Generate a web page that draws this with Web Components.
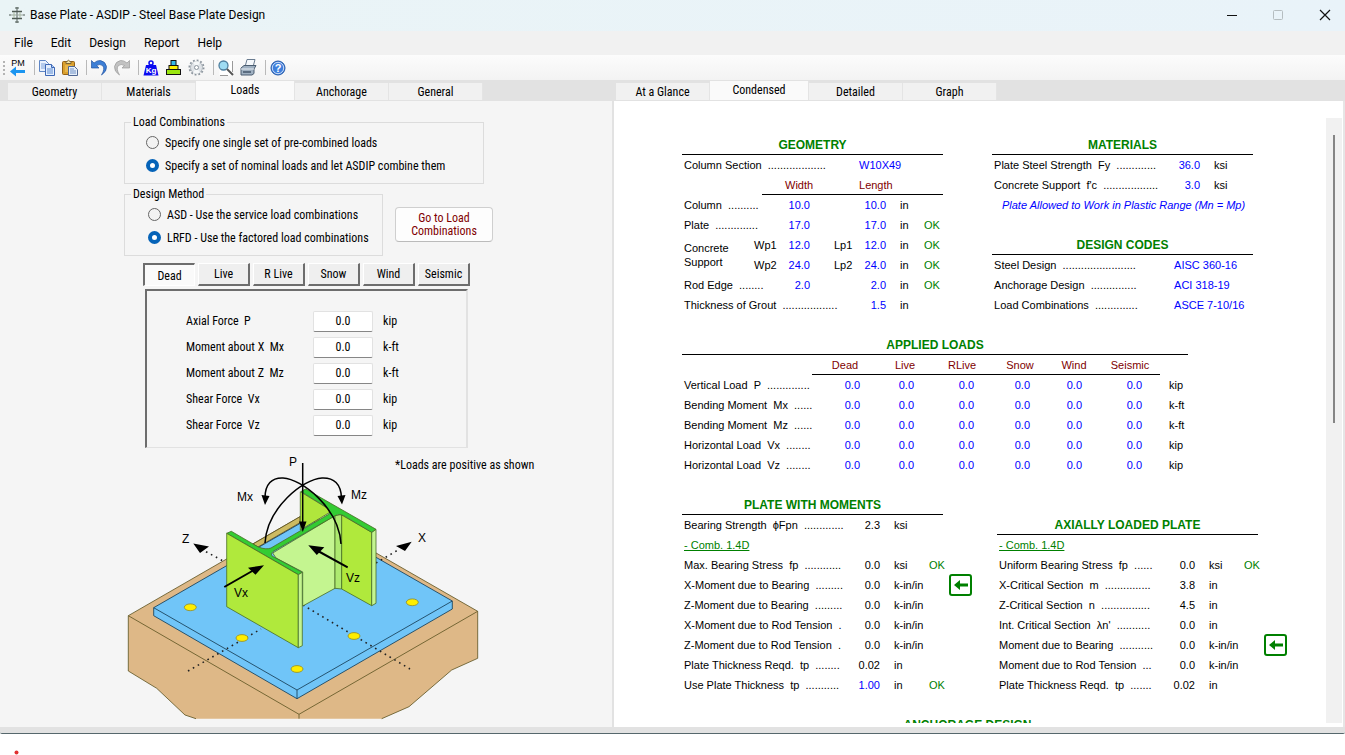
<!DOCTYPE html>
<html lang="en">
<head>
<meta charset="utf-8">
<title>Base Plate - ASDIP - Steel Base Plate Design</title>
<style>
html, body { margin: 0; height: 100%; background: #fff; }
body { --ui: "Roboto Condensed", Roboto, "Liberation Sans", sans-serif; --report: "Liberation Sans", Arial, sans-serif; font: 12px/14px var(--ui); color: #000; overflow: hidden; }
</style>
</head>
<body>
<app-window></app-window>
<script>
const define = (name, html, setup) => {
  const template = document.createElement('template');
  template.innerHTML = html;
  customElements.define(name, class extends HTMLElement {
    connectedCallback() {
      if (this.shadowRoot) return;
      this.attachShadow({ mode: 'open' }).append(template.content.cloneNode(true));
      if (setup) setup(this, this.shadowRoot);
    }
  });
};

define('title-bar', `
<style>
:host { display: flex; box-sizing: border-box; align-items: center; height: 31px; padding: 0 0 2px 9px; background: linear-gradient(90deg, #eaf4f6, #e9f3f9); font: 12px/16px Roboto, sans-serif; }
h1 { flex: 1; margin: 0 0 0 5px; font: inherit; }
button { width: 46px; height: 29px; padding: 0; border: 0; background: none; display: grid; place-items: center; }
button:last-child { width: 44px; padding-left: 4px; margin-left: 0; }
</style>
<svg width="16" height="18" viewBox="0 0 16 18" fill="none" stroke="#4f5a55"><path d="M8 1v16M6 2h4M6 16h4M0 9h2M14 9h2"/><path d="M3 5.500h10M3 12.500h10" stroke-width="1.500"/><path d="M2 9h12" stroke="#99a59c"/><path d="M5 6v6M11 6v6" stroke="#a8b8a0"/></svg>
<h1>Base Plate - ASDIP - Steel Base Plate Design</h1>
<button aria-label="Minimize"><svg width="12" height="12" stroke="#111"><path d="M1 6.500h10"/></svg></button>
<button aria-label="Maximize" disabled><svg width="12" height="12" fill="none" stroke="#b5bdc0"><rect x="1.500" y="1.500" width="9" height="9" rx="1"/></svg></button>
<button aria-label="Close"><svg width="12" height="12" stroke="#111" stroke-width="1.200"><path d="M1 1l10 10M11 1L1 11"/></svg></button>
`);

define('menu-bar', `
<style>
:host { display: block; background: #f1f1f1; font: 12px/24px Roboto, sans-serif; }
nav { display: flex; gap: 18px; padding-left: 14px; height: 24px; }
a { color: inherit; text-decoration: none; }
</style>
<nav><a href="#file">File</a><a href="#edit">Edit</a><a href="#design">Design</a><a href="#report">Report</a><a href="#help">Help</a></nav>
`);

define('tool-bar', `
<style>
:host { display: flex; align-items: center; height: 25px; padding-left: 3px; background: linear-gradient(#fcfcfc, #f3f3f3); }
button { padding: 0; border: 0; background: none; width: 23px; height: 23px; display: grid; place-items: center; }
i { width: 1px; height: 15px; background: #b9b9b9; margin: 0 0 0 5px; }
.grip { width: 2px; height: 14px; margin: 0 1px 0 0; background: repeating-linear-gradient(#b4b4b4 0 2px, transparent 2px 4px); }
svg { display: block; overflow: visible; }
text { font-family: "Liberation Sans", sans-serif; }
</style>
<i class="grip"></i>
<button aria-label="PM"><svg width="16" height="18"><text x="8" y="7" text-anchor="middle" font-size="9">PM</text><path d="M0 12.500l6-5v3.500h9v3H6v3.500z" fill="#1b95f0"/></svg></button>
<i></i>
<button aria-label="Copy"><svg width="16" height="16"><path d="M.500.500h6l3 3v8h-9z" fill="#eaf2fd" stroke="#5f86c5"/><path d="M2 4h5M2 6h5M2 8h5" stroke="#7ea4dc"/><path d="M6.500 4.500h6l3 3v8h-9z" fill="#e4effd" stroke="#3e68b5"/><path d="M12.500 4.500v3h3" fill="#b2cdf5" stroke="#3e68b5"/><path d="M8 9h6M8 11h6M8 13h6" stroke="#5d8bd2"/></svg></button>
<button aria-label="Paste"><svg width="16" height="16"><rect x=".500" y="1.500" width="12" height="13" rx="1" fill="#d9a02e" stroke="#946117"/><path d="M4 3.500V1.500h1Q6.500-1 8 1.500h1v2z" fill="#f4e3a5" stroke="#7c6636"/><path d="M3 5h7v7H3z" fill="#e8b64b"/><path d="M6.500 6.500h6l3 3v6h-9z" fill="#e6effa" stroke="#4f6793"/><path d="M8 9h4M8 11h6M8 13h6" stroke="#6e90c5"/></svg></button>
<i></i>
<button aria-label="Undo"><svg width="16" height="16"><path d="M.500.500v7.500h7.500L5.500 5.500Q9 3.500 11.500 5.500 14.500 8.500 10.500 15 16 11.500 15.500 6.500 14.500 1.500 9.500.500 6 .200 3 3z" fill="#3d7fd6" stroke="#2454a2" stroke-width=".7"/></svg></button>
<button aria-label="Redo" disabled><svg width="16" height="16"><path d="M15.500.500v7.500H8L10.500 5.500Q7 3.500 4.500 5.500 1.500 8.500 5.500 15 0 11.500.500 6.500 1.500 1.500 6.500.500 10 .200 13 3z" fill="#c2c2c2" stroke="#9a9a9a" stroke-width=".7"/></svg></button>
<i></i>
<button aria-label="Units"><svg width="16" height="16"><circle cx="8" cy="3" r="2" fill="none" stroke="#0a0af0" stroke-width="1.500"/><path d="M3 5h10l2.500 10.500H.500z" fill="#0a0af0"/><text x="8" y="13" text-anchor="middle" font-size="8" font-weight="bold" fill="#fff">Kg</text></svg></button>
<button aria-label="Footing"><svg width="15" height="15" stroke="#111"><rect x="5" y=".5" width="5" height="5" fill="#38b9e8"/><rect x="3" y="5.500" width="9" height="4" fill="#fff100"/><rect x=".5" y="9.500" width="14" height="5" fill="#9be610"/></svg></button>
<button aria-label="Settings"><svg width="17" height="17"><circle cx="8.500" cy="8.500" r="7" fill="none" stroke="#8c959e" stroke-width="2" stroke-dasharray="1.800 1.860"/><circle cx="8.500" cy="8.500" r="6" fill="#dfe3e7" stroke="#b0b7bd"/><path d="M8.500 8.500L5 3.500a6 6 0 0 1 7 0zM8.500 8.500L5 13.500a6 6 0 0 0 7 0z" fill="#f6f8f9"/><circle cx="8.500" cy="8.500" r="2" fill="#fff" stroke="#8c959e"/></svg></button>
<i></i>
<button aria-label="Preview"><svg width="16" height="16"><path d="M1.500.500h13v15h-13z" fill="#fff"/><path d="M14.500 1v11M2 15.500h8" stroke="#9a9a9a"/><circle cx="5.500" cy="5.500" r="4.500" fill="#9fdcf3" stroke="#4f7f9f" stroke-width="1.300"/><path d="M9 9l6 6" stroke="#555" stroke-width="2"/></svg></button>
<button aria-label="Print"><svg width="17" height="17"><path d="M5 8l2-7.500h8L13 8z" fill="#f6f9fc" stroke="#6a7c90"/><path d="M1 9l3-2.500h12L14 10v4.500L12 16H1z" fill="#9fb0c1" stroke="#4b5d70"/><path d="M1 10h13" stroke="#e8eef4"/><path d="M3 13h8" stroke="#43566a" stroke-width="1.500"/></svg></button>
<i></i>
<button aria-label="Help"><svg width="16" height="16"><circle cx="8" cy="8" r="7" fill="#3f7fdc" stroke="#2459a8"/><circle cx="8" cy="8" r="5.700" fill="none" stroke="#c8dcf8"/><text x="8" y="12" text-anchor="middle" font-size="11" font-weight="bold" fill="#fff">?</text></svg></button>
`);

define('tab-strip', `
<style>
:host { display: flex; height: 21px; align-items: flex-end; background: #e2e2e2; border-bottom: 1px solid #e2e2e2; box-sizing: border-box; }
::slotted(button) { box-sizing: border-box; width: 94px; height: 17px; padding: 0; border: 0; border-right: 1px solid #e4e4e4; background: #f1f1f1; font: 12px/16px var(--ui); color: #000; }
::slotted(button[aria-selected="true"]) { width: 99px; height: 19px; padding-bottom: 2px; background: #fafafa; }
</style>
<slot></slot>
`);

define('radio-row', `
<style>
:host { display: block; }
label { display: flex; align-items: center; gap: 6px; height: 23px; }
input { appearance: none; box-sizing: border-box; width: 13px; height: 13px; margin: 0; border: 1px solid #666; border-radius: 50%; background: #f3f3f3; }
input:checked { border: 4px solid #0563b8; background: #fff; }
</style>
<label><input type="radio"><span><slot></slot></span></label>
`, (host, root) => { root.querySelector('input').checked = host.hasAttribute('checked'); });

define('load-row', `
<style>
:host { display: block; }
label { display: grid; grid-template-columns: 127px 60px 1fr; align-items: center; height: 26px; white-space: pre; }
input { box-sizing: border-box; width: 60px; height: 21px; padding: 0; border: 1px solid #e2e2e2; border-bottom-color: #868686; border-radius: 2px; background: #fff; text-align: center; font: 12px/16px var(--ui); }
.unit { padding-left: 10px; }
</style>
<label><slot></slot><input type="text" value="0.0"><span class="unit"></span></label>
`, (host, root) => { root.querySelector('.unit').textContent = host.getAttribute('unit'); });

define('load-diagram', `
<style>
:host { display: block; }
svg { display: block; }
text { font: 12px "Liberation Sans", sans-serif; }
</style>
<svg width="420" height="270" viewBox="124 450 420 270" role="img" aria-label="Base plate with positive load directions">
<g stroke="#5a5220" stroke-width=".8" stroke-linejoin="round">
<path d="M128.300 615.700L306.400 513 477.700 611.300V624V658.300L451.700 670 409 706.700 381.700 718.700H196L185 715 156.700 688.300 128.300 671z" fill="#deb887" stroke="none"/>
<path d="M196 718.700L185 715 156.700 688.300 128.300 671V615.700L306.400 513 477.700 611.300V658.300L451.700 670 409 706.700 381.700 718.700" fill="none"/>
<path d="M128.300 615.700L299 714.300 477.700 611.300M299 714.300V718.700" fill="none"/>
<path d="M253 544L300 516.700V522.700L258 547z" fill="#cdbb62"/>
</g>
<g stroke="#1d4660" stroke-width=".9" fill="#70c5f8" stroke-linejoin="round">
<path d="M153.700 607.700L308.400 518.600 452.300 601V609L297 698.700 153.700 615.700z"/>
<path d="M153.700 607.700L297 690 452.300 601M297 690V698.700" fill="none"/>
</g>
<path d="M206 551.700L224 561.500M303 605L410 669M188 671L261 629M376 563L398 550" stroke="#222" stroke-width="1.600" stroke-dasharray="1.600 4" fill="none"/>
<g fill="#ffee00" stroke="#8f8a2a" stroke-width=".8">
<ellipse cx="190.300" cy="607.300" rx="6" ry="3.400"/><ellipse cx="242" cy="638" rx="6" ry="3.400"/><ellipse cx="297" cy="669" rx="6" ry="3.400"/><ellipse cx="354" cy="636" rx="6" ry="3.400"/><ellipse cx="412.300" cy="602.300" rx="6" ry="3.400"/>
</g>
<g stroke="#476b25" stroke-width=".8" stroke-linejoin="round">
<path d="M300.300 491.700L332 511 300.300 530z" fill="#b0e63c"/>
<path d="M272.700 553L335 515.700V588.300L302.700 606V572L276 558z" fill="#c4f590"/>
<path d="M335 515.700L341.700 514.300V589L335 588.300z" fill="#aeea70"/>
<path d="M341.700 515L371.700 532.300V605.700L341.700 589z" fill="#b0e93c"/>
<path d="M371.700 532.300L376 529.300V603.300L371.700 605.700z" fill="#c4f590"/>
<path d="M301 491.500L305.700 489 376 529.300 371.700 532.300 343 515.300Q339 513.500 335 515.700L273 551.500Q270 554 272 556L302.300 572.300 298.300 574.700 226.700 533.300 231.300 531.300 258.300 547Q266 550 271 548L329 514Q331 511 326 507z" fill="#33cc33"/>
<path d="M226.700 533.300L298.300 574.700V647.700L226.700 606.700z" fill="#b0e93c"/>
<path d="M298.300 574.700L302.300 572.300V645.700L298.300 647.700z" fill="#c4f590"/>
</g>
<g fill="none" stroke="#000" stroke-width="1.500">
<path d="M302.700 463V525M265 498C265 484 272 477.500 283 478C302 479 339 508 341 544M341.500 498C341 484 334 477.500 322 478C303 479 267 508 265 543"/>
<path d="M224.300 587L254 570M347.700 567.300L318 551" stroke-width="2"/>
</g>
<path d="M299 521.500h7.500l-3.700 10.500zM261.500 495l8 1-4.500 9zM337.500 496l8-1-3.500 9.500zM193.300 543.500l15.700 3-9 6.500zM411.700 541.700l-15.700 4.300 9 5zM264 565.300l-16 2.400 7.500 7zM308.300 545.300l16 2-7.500 7.700z"/>
<text x="289" y="466">P</text><text x="237" y="501">Mx</text><text x="351" y="499">Mz</text><text x="182" y="543">Z</text><text x="418" y="542">X</text><text x="234" y="597">Vx</text><text x="346" y="582">Vz</text>
</svg>
`);

define('loads-panel', `
<style>
:host { display: block; box-sizing: border-box; margin: 0 3px 0 6px; padding: 14px 0 0 118px; background: #f5f5f5; overflow: hidden; }
fieldset { box-sizing: border-box; margin: 0; padding: 2px 0 6px 21px; border: 1px solid #dcdcdc; width: 360px; }
legend { margin-left: -15px; padding: 0 2px; line-height: 14px; }
.method { display: flex; align-items: flex-end; gap: 12px; margin-top: 3px; }
.method fieldset { width: 259px; padding-left: 23px; }
.method legend { margin-left: -17px; }
.go { box-sizing: border-box; width: 98px; height: 35px; margin-bottom: 14px; padding: 0; border: 1px solid #cfcfcf; border-bottom-color: #bbb; border-radius: 4px; background: #fdfdfd; color: #800000; font: 12px/13px var(--ui); }
.cases { display: flex; gap: 3px; margin: 7px 0 3px 19px; }
.cases button { box-sizing: border-box; width: 52px; height: 23px; padding: 0; border: 1px solid #fff; border-right: 2px solid #6d6d6d; border-bottom: 2px solid #6d6d6d; background: #efefef; font: 12px/16px var(--ui); color: #000; }
.cases button[aria-selected="true"] { border: 2px solid #6d6d6d; border-right: 1px solid #fff; border-bottom: 1px solid #fff; background: #fafafa; padding-top: 1px; }
.inputs { box-sizing: border-box; width: 323px; margin-left: 21px; padding: 17px 0 9px 39px; border: 2px solid #6d6d6d; border-right-color: #e2e2e2; border-bottom-color: #e2e2e2; border-bottom-width: 1px; }
figure { display: grid; margin: 2px 0 0; }
load-diagram, figcaption { grid-area: 1 / 1; }
figcaption { padding: 8px 0 0 271px; }
</style>
<fieldset><legend>Load Combinations</legend>
<radio-row>Specify one single set of pre-combined loads</radio-row>
<radio-row checked>Specify a set of nominal loads and let ASDIP combine them</radio-row></fieldset>
<div class="method"><fieldset><legend>Design Method</legend>
<radio-row>ASD - Use the service load combinations</radio-row>
<radio-row checked>LRFD - Use the factored load combinations</radio-row></fieldset>
<button class="go">Go to Load<br>Combinations</button></div>
<div class="cases" role="tablist"><button role="tab" aria-selected="true">Dead</button><button role="tab">Live</button><button role="tab">R Live</button><button role="tab">Snow</button><button role="tab">Wind</button><button role="tab">Seismic</button></div>
<div class="inputs"><load-row unit="kip">Axial Force  P</load-row><load-row unit="k-ft">Moment about X  Mx</load-row><load-row unit="k-ft">Moment about Z  Mz</load-row><load-row unit="kip">Shear Force  Vx</load-row><load-row unit="kip">Shear Force  Vz</load-row></div>
<figure><load-diagram></load-diagram><figcaption>*Loads are positive as shown</figcaption></figure>
`);

define('report-section', `
<style>
:host { display: block; }
h2 { box-sizing: border-box; width: var(--rule, 261px); height: 20px; margin: 0; border-bottom: 1px solid #000; font: bold 12px/20px var(--report); color: #008000; text-align: center; }
</style>
<h2></h2><slot></slot>
`, (host, root) => { root.querySelector('h2').textContent = host.getAttribute('heading'); });

const dots = n => '.'.repeat(n);
const cols = list => '<colgroup>' + list.map(w => `<col style="width:${w}px">`).join('') + '</colgroup>';
const go = '<button class="jump" aria-label="Go to input"><svg width="14" height="12"><path d="M0 6l6-5v3.500h8v3H6V11z" fill="#008000"/></svg></button>';
const checks = rows => `<table style="width:290px">${cols([158, 40, 49, 20, 23])}<tbody>` + rows.map(r => r.length === 1
  ? `<tr><td colspan="5"><a href="#comb">${r[0]}</a></td></tr>`
  : `<tr><td>${r[0]}  ${dots(r[1])}</td><td class="r${r[6] ? ' b' : ''}">${r[2]}</td><td class="u">${r[3]}</td><td class="g">${r[4] || ''}</td><td>${r[5] ? go : ''}</td></tr>`).join('') + '</tbody></table>';
const pair = (label, w, l, ok, n) => `<tr><td colspan="3">${label}  ${dots(n)}</td><td class="r b">${w}</td><td></td><td class="r b">${l}</td><td class="u">in</td><td class="g">${ok}</td></tr>`;
const support = (i, v, first) => `<tr>${first ? '<td rowspan="2">Concrete<br>Support</td>' : ''}<td colspan="2" class="wp">Wp${i}</td><td class="r b">${v}</td><td class="lp">Lp${i}</td><td class="r b">${v}</td><td class="u">in</td><td class="g">OK</td></tr>`;
const loadRow = (label, n, unit) => `<tr><td>${label}  ${dots(n)}</td>${'<td class="v b">0.0</td>'.repeat(6)}<td class="k">${unit}</td></tr>`;

define('report-view', `
<style>
:host { display: grid; grid-template-columns: 1fr 16px; margin: 17px 0 0 3px; background: #fff; overflow: hidden; }
.page { padding: 17px 0 0 65px; font: 11px/14px var(--report); overflow: hidden; }
.band { display: flex; gap: 49px; margin-bottom: 20px; }
.band.last { gap: 25px; }
.stack { display: grid; gap: 20px; align-content: start; }
table { table-layout: fixed; border-collapse: separate; border-spacing: 0; width: 261px; }
td, th { box-sizing: border-box; height: 20px; padding: 0; white-space: pre; font-weight: normal; text-align: left; line-height: 14px; }
td:first-child, td.wp { padding-left: 2px; }
.r { text-align: right; }
.b { color: #0000ff; }
.g { color: #008000; }
.u { padding-left: 14px; }
.k { padding-left: 9px; }
.v { text-align: right; padding-right: 18px; color: #0000ff; }
.lp { padding-left: 24px; }
th { color: #800000; border-bottom: 1px solid #000; }
.mid { text-align: center; }
a { color: #008000; }
.jump { box-sizing: border-box; display: grid; place-items: center; width: 23px; height: 22px; margin: -1px 0; padding: 0; border: 2px solid #008000; border-radius: 3px; background: #fff; }
.applied { --rule: 506px; }
.wide { --rule: 571px; }
.offset { margin-top: 20px; }
.track { background: #f1f1f1; padding: 17px 7px 0; }
.thumb { width: 2px; height: 288px; background: #858585; }
</style>
<div class="page">
<div class="band">
<report-section heading="GEOMETRY"><table>${cols([70, 10, 18, 30, 45, 31, 38, 19])}<tbody>
<tr><td colspan="5">Column Section  ${dots(19)}</td><td colspan="3" class="b" style="padding-left:4px">W10X49</td></tr>
<tr><td colspan="2"></td><th colspan="3" style="padding-left:23px">Width</th><th colspan="3" style="padding-left:4px">Length</th></tr>
${pair('Column', '10.0', '10.0', '', 10)}${pair('Plate', '17.0', '17.0', 'OK', 14)}
${support(1, '12.0', true)}${support(2, '24.0', false)}
${pair('Rod Edge', '2.0', '2.0', 'OK', 8)}
<tr><td colspan="5">Thickness of Grout  ${dots(18)}</td><td class="r b">1.5</td><td class="u">in</td><td></td></tr>
</tbody></table></report-section>
<div class="stack">
<report-section heading="MATERIALS"><table>${cols([170, 38, 53])}<tbody>
<tr><td>Plate Steel Strength  Fy  ${dots(13)}</td><td class="r b">36.0</td><td class="u">ksi</td></tr>
<tr><td>Concrete Support  f'c  ${dots(18)}</td><td class="r b">3.0</td><td class="u">ksi</td></tr>
<tr><td colspan="3" class="mid b"><em>Plate Allowed to Work in Plastic Range (Mn = Mp)</em></td></tr>
</tbody></table></report-section>
<report-section heading="DESIGN CODES"><table>${cols([182, 79])}<tbody>
<tr><td>Steel Design  ${dots(24)}</td><td class="b">AISC 360-16</td></tr>
<tr><td>Anchorage Design  ${dots(15)}</td><td class="b">ACI 318-19</td></tr>
<tr><td>Load Combinations  ${dots(14)}</td><td class="b">ASCE 7-10/16</td></tr>
</tbody></table></report-section>
</div></div>
<div class="band"><report-section class="applied" heading="APPLIED LOADS"><table style="width:506px">${cols([130, 66, 54, 60, 56, 52, 60, 28])}<tbody>
<tr><td></td>${['Dead', 'Live', 'RLive', 'Snow', 'Wind', 'Seismic'].map(t => `<th class="mid">${t}</th>`).join('')}<td></td></tr>
${loadRow('Vertical Load  P', 14, 'kip')}${loadRow('Bending Moment  Mx', 6, 'k-ft')}${loadRow('Bending Moment  Mz', 6, 'k-ft')}${loadRow('Horizontal Load  Vx', 8, 'kip')}${loadRow('Horizontal Load  Vz', 8, 'kip')}
</tbody></table></report-section></div>
<div class="band last">
<report-section heading="PLATE WITH MOMENTS">${checks([
['Bearing Strength  ϕFpn', 13, '2.3', 'ksi'], ['- Comb. 1.4D'],
['Max. Bearing Stress  fp', 12, '0.0', 'ksi', 'OK'],
['X-Moment due to Bearing', 9, '0.0', 'k-in/in', '', true],
['Z-Moment due to Bearing', 9, '0.0', 'k-in/in'],
['X-Moment due to Rod Tension', 1, '0.0', 'k-in/in'],
['Z-Moment due to Rod Tension', 1, '0.0', 'k-in/in'],
['Plate Thickness Reqd.  tp', 8, '0.02', 'in'],
['Use Plate Thickness  tp', 11, '1.00', 'in', 'OK', false, true]])}</report-section>
<report-section class="offset" heading="AXIALLY LOADED PLATE">${checks([
['- Comb. 1.4D'],
['Uniform Bearing Stress  fp', 6, '0.0', 'ksi', 'OK'],
['X-Critical Section  m', 15, '3.8', 'in'],
['Z-Critical Section  n', 16, '4.5', 'in'],
["Int. Critical Section  λn'", 11, '0.0', 'in'],
['Moment due to Bearing', 11, '0.0', 'k-in/in', '', true],
['Moment due to Rod Tension', 3, '0.0', 'k-in/in'],
['Plate Thickness Reqd.  tp', 7, '0.02', 'in']])}</report-section>
</div>
<report-section class="wide" heading="ANCHORAGE DESIGN"></report-section>
</div>
<div class="track"><div class="thumb"></div></div>
`);

define('app-window', `
<style>
:host { display: flex; flex-direction: column; height: 100vh; }
.window { flex: 1; min-height: 0; display: flex; flex-direction: column; background: #f0f0f0; border-bottom: 1px solid #56676c; border-radius: 0 0 2px 2px; overflow: hidden; }
main { flex: 1; min-height: 0; display: grid; grid-template-columns: 614fr 731fr; padding-bottom: 6px; background: #e2e2e2; }
section { display: flex; flex-direction: column; min-height: 0; min-width: 0; background: #f5f5f5; }
loads-panel { flex: 1; min-height: 0; }
.left { border-right: 2px solid #e2e2e2; }
.left tab-strip { padding-left: 8px; }
.right tab-strip { padding-left: 2px; }
.result { flex: 1; min-height: 0; display: flex; background: #fff; padding-bottom: 4px; padding-right: 1px; border-right: 2px solid #e6e6e6; }
report-view { flex: 1; min-width: 0; }
footer { height: 21px; box-sizing: border-box; padding: 16px 0 0 14px; background: #fff; }
footer svg { display: block; }
</style>
<div class="window">
<title-bar></title-bar><menu-bar></menu-bar><tool-bar></tool-bar>
<main>
<section class="left"><tab-strip><button>Geometry</button><button>Materials</button><button aria-selected="true">Loads</button><button>Anchorage</button><button>General</button></tab-strip><loads-panel></loads-panel></section>
<section class="right"><tab-strip><button>At a Glance</button><button aria-selected="true">Condensed</button><button>Detailed</button><button>Graph</button></tab-strip><div class="result"><report-view></report-view></div></section>
</main>
</div>
<footer><svg width="5" height="5"><circle cx="2.500" cy="2.500" r="2" fill="#e03030"/></svg></footer>
`);
</script>
</body>
</html>
